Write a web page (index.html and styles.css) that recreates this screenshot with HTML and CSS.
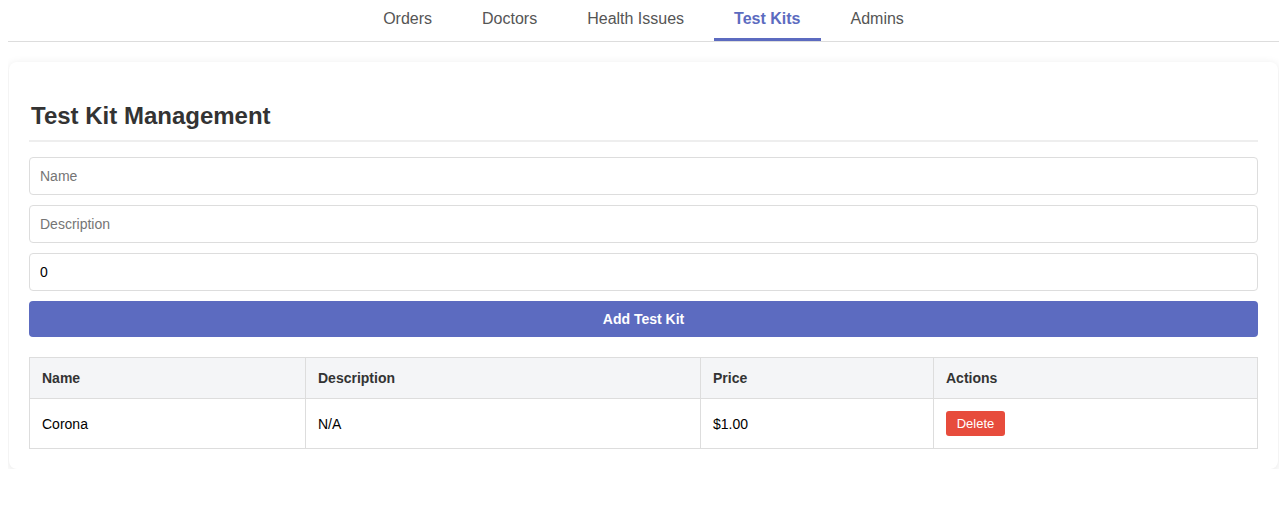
FILE: index.html
```html
<!DOCTYPE html>
<html>
<head>
<meta charset="utf-8">
<link rel="stylesheet" href="styles.css">
</head>
<body>
<nav class="tabs">
  <a class="tab">Orders</a>
  <a class="tab">Doctors</a>
  <a class="tab">Health Issues</a>
  <a class="tab active">Test Kits</a>
  <a class="tab">Admins</a>
</nav>
<main class="card">
  <h2 class="title">Test Kit Management</h2>
  <form class="form">
    <input class="field" type="text" placeholder="Name">
    <input class="field" type="text" placeholder="Description">
    <input class="field" type="text" value="0">
    <button class="add-btn" type="button">Add Test Kit</button>
  </form>
  <table class="kits">
    <colgroup>
      <col class="c1"><col class="c2"><col class="c3"><col class="c4">
    </colgroup>
    <thead>
      <tr><th>Name</th><th>Description</th><th>Price</th><th>Actions</th></tr>
    </thead>
    <tbody>
      <tr><td>Corona</td><td>N/A</td><td>$1.00</td><td><button class="del-btn" type="button">Delete</button></td></tr>
    </tbody>
  </table>
</main>
</body>
</html>
```
FILE: styles.css
```css
* { box-sizing: border-box; }
body {
  margin: 0 8px 8px;
  font-family: "Liberation Sans", Arial, sans-serif;
  background: #fff;
  color: #333;
}
.tabs {
  display: flex;
  justify-content: center;
  gap: 10px;
  border-bottom: 1px solid #ddd;
  margin-bottom: 20px;
}
.tab {
  padding: 9px 20px 10px;
  font-size: 16px;
  line-height: 19px;
  color: #555;
  border-bottom: 3px solid transparent;
  cursor: pointer;
}
.tab.active {
  color: #5c6bc0;
  font-weight: bold;
  border-bottom-color: #5c6bc0;
}
.card {
  margin: 0 1px;
  background: #fff;
  border-radius: 8px;
  box-shadow: 0 2px 10px rgba(0,0,0,0.1);
  padding: 20px;
}
.title {
  margin: 20px 0 15px;
  padding: 0 0 10px 2px;
  font-size: 24px;
  line-height: 28px;
  color: #333;
  border-bottom: 2px solid #eee;
}
.form {
  display: flex;
  flex-direction: column;
  gap: 10px;
}
.field {
  height: 38px;
  padding: 10px;
  border: 1px solid #ddd;
  border-radius: 4px;
  font-family: inherit;
  font-size: 14px;
  color: #000;
}
.field::placeholder { color: #757575; }
.add-btn {
  height: 36px;
  border: none;
  border-radius: 4px;
  background: #5c6bc0;
  color: #fff;
  font-family: inherit;
  font-size: 14px;
  font-weight: bold;
}
.kits {
  width: 100%;
  margin-top: 20px;
  border-collapse: collapse;
  font-size: 14px;
}
.c1 { width: 276px; }
.c2 { width: 395px; }
.c3 { width: 233px; }
.kits th, .kits td {
  border: 1px solid #ddd;
  padding: 12px;
  text-align: left;
}
.kits th {
  height: 41px;
  background: #f4f5f7;
  font-weight: bold;
  color: #333;
}
.kits td {
  height: 50px;
  color: #000;
}
.del-btn {
  background: #e74c3c;
  color: #fff;
  border: none;
  border-radius: 3px;
  padding: 5px 10px;
  font-family: inherit;
  font-size: 13px;
  height: 25px;
  width: 59px;
}
```
